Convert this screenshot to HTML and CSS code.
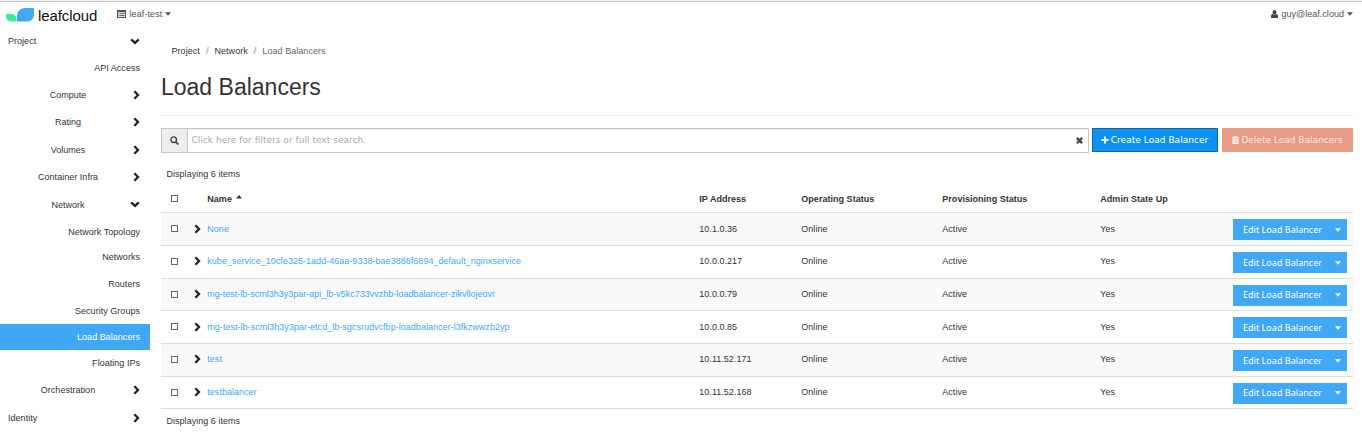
FILE: index.html
```html
<!DOCTYPE html>
<html lang="en">
<head>
<meta charset="utf-8">
<title>Load Balancers</title>
<link rel="stylesheet" href="styles.css">
</head>
<body>
<svg class="defs" width="0" height="0" aria-hidden="true">
  <symbol id="chev" viewBox="0 0 7 10"><path d="M1.4 1.2 5 5 1.4 8.8" fill="none" stroke="currentColor" stroke-width="2.3"/></symbol>
  <symbol id="down" viewBox="0 0 10 7"><path d="M1.2 1.4 5 4.9 8.8 1.4" fill="none" stroke="currentColor" stroke-width="2.3"/></symbol>
  <symbol id="caret" viewBox="0 0 6 4"><path d="M0 .3h6L3 3.7z" fill="currentColor"/></symbol>
</svg>
<header class="topbar">
  <a class="brand">
    <svg class="leaf" width="30" height="16" viewBox="0 0 30 16"><path d="M0 6h5.500c3 0 5 2.200 5 5v2.500H5.500C2 13.500 0 11 0 8z" fill="#38ef93"/><path d="M28 0v6c0 5-3 7.500-7.500 7.500H11V8.500C11 3 14 0 19.500 0z" fill="#41a8f6"/></svg>
    <span class="wordmark">leafcloud</span>
  </a>
  <div class="switch">
    <svg width="9" height="8" viewBox="0 0 9 8"><path d="M0 0h9v8H0z" fill="#555"/><path d="M1 2h7v5H1z" fill="#ddd"/><path d="M1.500 3.300h1M3.200 3.300h4.300M1.500 5.500h1M3.200 5.500h4.300" stroke="#555" stroke-width=".9"/></svg>
    <span>leaf-test</span><svg class="caret" width="6" height="4"><use href="#caret"/></svg>
  </div>
  <div class="user">
    <svg width="7" height="8" viewBox="0 0 7 8"><ellipse cx="3.500" cy="2.200" rx="1.900" ry="2.200" fill="#444"/><path d="M0 8V6.200C0 4.600.8 4 1.800 4c1 .8 2.400.8 3.400 0C6.300 4 7 4.700 7 6.200V8z" fill="#444"/></svg>
    <span>guy@leaf.cloud</span><svg class="caret" width="6" height="4"><use href="#caret"/></svg>
  </div>
</header>
<div class="layout">
<nav class="side">
  <a class="top"><span>Project</span><svg width="10" height="7"><use href="#down"/></svg></a>
  <a class="leafitem">API Access</a>
  <a class="mid"><span>Compute</span><svg width="7" height="10"><use href="#chev"/></svg></a>
  <a class="mid"><span>Rating</span><svg width="7" height="10"><use href="#chev"/></svg></a>
  <a class="mid"><span>Volumes</span><svg width="7" height="10"><use href="#chev"/></svg></a>
  <a class="mid"><span>Container Infra</span><svg width="7" height="10"><use href="#chev"/></svg></a>
  <a class="mid"><span>Network</span><svg width="10" height="7"><use href="#down"/></svg></a>
  <a class="leafitem">Network Topology</a>
  <a class="leafitem">Networks</a>
  <a class="leafitem">Routers</a>
  <a class="leafitem">Security Groups</a>
  <a class="leafitem active">Load Balancers</a>
  <a class="leafitem">Floating IPs</a>
  <a class="mid"><span>Orchestration</span><svg width="7" height="10"><use href="#chev"/></svg></a>
  <a class="top"><span>Identity</span><svg width="7" height="10"><use href="#chev"/></svg></a>
</nav>
<main class="main">
  <div class="crumbs"><a>Project</a><i>/</i><a>Network</a><i>/</i><span>Load Balancers</span></div>
  <h1>Load Balancers</h1>
  <div class="tools">
    <div class="search">
      <div class="glass"><svg width="9" height="9" viewBox="0 0 9 9"><circle cx="3.700" cy="3.700" r="2.800" fill="none" stroke="#444" stroke-width="1.400"/><path d="M5.800 5.800 8.300 8.300" stroke="#444" stroke-width="1.700"/></svg></div>
      <div class="field"><span>Click here for filters or full text search.</span><svg width="7" height="7" viewBox="0 0 7 7"><path d="M.9.900l5.200 5.200M6.100.900.900 6.100" stroke="#444" stroke-width="2.200"/></svg></div>
    </div>
    <button class="btn create"><svg width="8" height="8" viewBox="0 0 8 8"><path d="M4 .5v7M.5 4h7" stroke="#fff" stroke-width="2"/></svg><span>Create Load Balancer</span></button>
    <button class="btn delete"><svg width="7" height="8" viewBox="0 0 7 8"><path d="M0 1h2V0h3v1h2v1H0zM.6 2.500h5.800V8H.6z" fill="#fff"/><path d="M2.300 3.500V7M3.500 3.500V7M4.700 3.500V7" stroke="#e99c85" stroke-width=".5"/></svg><span>Delete Load Balancers</span></button>
  </div>
  <div class="count">Displaying 6 items</div>
  <div class="table">
    <div class="row head"><i class="box"></i><span></span><span class="name">Name<svg class="sort" width="6" height="4" viewBox="0 0 6 4"><path d="M0 3.500h6L3 0z" fill="currentColor"/></svg></span><span>IP Address</span><span>Operating Status</span><span>Provisioning Status</span><span>Admin State Up</span></div>
    <div class="row odd"><i class="box"></i><svg width="7" height="10"><use href="#chev"/></svg><a>None</a><span>10.1.0.36</span><span>Online</span><span>Active</span><span>Yes</span><div class="edit"><span>Edit Load Balancer</span><svg width="6" height="4"><use href="#caret"/></svg></div></div>
    <div class="row raised"><i class="box"></i><svg width="7" height="10"><use href="#chev"/></svg><a>kube_service_10cfe325-1add-46aa-9338-bae3888f6894_default_nginxservice</a><span>10.0.0.217</span><span>Online</span><span>Active</span><span>Yes</span><div class="edit"><span>Edit Load Balancer</span><svg width="6" height="4"><use href="#caret"/></svg></div></div>
    <div class="row odd raised"><i class="box"></i><svg width="7" height="10"><use href="#chev"/></svg><a class="tight">mg-test-lb-scml3h3y3par-api_lb-v5kc733vvzhb-loadbalancer-zikvllojeovr</a><span>10.0.0.79</span><span>Online</span><span>Active</span><span>Yes</span><div class="edit"><span>Edit Load Balancer</span><svg width="6" height="4"><use href="#caret"/></svg></div></div>
    <div class="row"><i class="box"></i><svg width="7" height="10"><use href="#chev"/></svg><a>mg-test-lb-scml3h3y3par-etcd_lb-sgcsrudvcfbp-loadbalancer-l3fkzwwzb2yp</a><span>10.0.0.85</span><span>Online</span><span>Active</span><span>Yes</span><div class="edit"><span>Edit Load Balancer</span><svg width="6" height="4"><use href="#caret"/></svg></div></div>
    <div class="row odd raised"><i class="box"></i><svg width="7" height="10"><use href="#chev"/></svg><a>test</a><span>10.11.52.171</span><span>Online</span><span>Active</span><span>Yes</span><div class="edit"><span>Edit Load Balancer</span><svg width="6" height="4"><use href="#caret"/></svg></div></div>
    <div class="row raised"><i class="box"></i><svg width="7" height="10"><use href="#chev"/></svg><a>testbalancer</a><span>10.11.52.168</span><span>Online</span><span>Active</span><span>Yes</span><div class="edit"><span>Edit Load Balancer</span><svg width="6" height="4"><use href="#caret"/></svg></div></div>
  </div>
  <div class="count foot">Displaying 6 items</div>
</main>
</div>
</body>
</html>
```
FILE: styles.css
```css
* { box-sizing: border-box; }
body {
  margin: 0;
  height: 433px;
  overflow: hidden;
  background: #fff;
  color: #333;
  font: 9px/12px "Liberation Sans", Arial, sans-serif;
  letter-spacing: .03px;
  white-space: nowrap;
}
svg { display: block; flex: none; }
.defs { position: absolute; }
.topbar {
  height: 27px;
  border-top: 1px solid #f2f2f2;
  box-shadow: inset 0 1px #c4c4c4;
  display: flex;
  align-items: center;
  padding: 0 9px 0 6px;
  color: #555;
}
.brand { display: flex; width: 111px; align-items: center; }
.leaf { margin-top: 3px; }
.wordmark { font: 15px/18px "Liberation Sans", Arial, sans-serif; letter-spacing: -.08px; color: #111; margin: 3px 0 0 2px; }
.switch, .user { display: flex; align-items: center; gap: 3px; }
.switch span { letter-spacing: .1px; padding-left: .5px; }
.user { margin-left: auto; }
.layout { display: grid; grid-template-columns: 150px 1fr; }
.side {
  display: grid;
  grid-template-rows: 28px 26px 28px 26px 29px 26px 29px 25px 27px 26px 27px 26px 27px 26px 29px;
}
.side a { display: flex; align-items: center; padding: 0 10px 0 8px; }
.side .leafitem { padding-bottom: 1px; }
.side .leafitem:nth-child(2), .side .leafitem:nth-child(8) { padding-bottom: 0; }
.side .leafitem:nth-child(11) { padding: 1px 10px 0 0; }
.top { justify-content: space-between; }
.side svg { color: #222; }
.side .mid { display: grid; grid-template-columns: 120px 1fr; }
.mid span { text-align: center; }
.mid svg { justify-self: end; }
.leafitem { justify-content: flex-end; }
.side .active { background: #41a8f6; color: #fff; }
.main { padding: 18px 9px 0 11px; }
.crumbs { display: flex; gap: 6px; padding-left: 10.500px; letter-spacing: .05px; }
.crumbs i { color: #888; font-style: normal; }
.crumbs span { color: #666; }
h1 {
  margin: 12px 0 0;
  height: 47px;
  border-bottom: 1px solid #eee;
  font-size: 23px;
  line-height: 36px;
  font-weight: 400;
  letter-spacing: 0;
}
.tools {
  display: grid;
  grid-template-columns: 928px 126px 131px;
  justify-content: space-between;
  margin-top: 12px;
  align-items: start;
  font-family: "DejaVu Sans", sans-serif;
  letter-spacing: 0;
}
.search { display: grid; grid-template-columns: 26px 1fr; height: 25px; border: 1px solid #c6c6c6; }
.glass { background: #eee; display: grid; place-items: center; border-right: 1px solid #c6c6c6; }
.field { display: flex; align-items: center; justify-content: space-between; padding: 0 5px 1px 3.500px; color: #aaa; box-shadow: inset 0 1px 1px #eee; letter-spacing: .03px; }
.btn {
  height: 24px;
  border: 1px solid #0f67ac;
  background: #0d91f2;
  color: #fff;
  padding: 0;
  font: inherit;
  display: flex;
  align-items: center;
  justify-content: center;
  gap: 2px;
}
.create { margin-left: -1px; margin-right: 1px; letter-spacing: .04px; }
.delete { background: #e99c85; border-color: #e99c85; color: #fbe8e2; }
.count { margin: 15px 0 0 5.500px; }
.table {
  display: grid;
  grid-template-rows: 32px 33px 33px 32px 33px 33px 32px;
  margin-top: 1px;
}
.row {
  display: grid;
  grid-template-columns: 22px 14px 492px 102px 141px 158px 133px 114px;
  padding-left: 10px;
  align-items: center;
  border-bottom: 1px solid #ddd;
}
.row > svg { color: #222; margin-left: .5px; }
.row > a, .row > span { padding-left: .3px; }
.row > a { color: #41a8f6; }
.row > .tight { letter-spacing: 0; }
.raised > a, .raised > span, .raised > svg { margin-bottom: 2px; }
.odd { background: #f9f9f9; }
.head { font-weight: 700; padding-top: 4px; }
.name { display: flex; align-items: center; }
.sort { margin: -4px 0 0 4px; }
.box { width: 7px; height: 7px; margin-bottom: 1px; border: 1px solid #666; background: #fff; }
.edit {
  height: 21px;
  margin-top: 1px;
  background: #41a8f6;
  color: #fff;
  display: flex;
  align-items: center;
  justify-content: space-between;
  padding: 0 6px 0 10px;
  letter-spacing: .03px;
  font-family: "Noto Sans", sans-serif;
}
.foot { margin-top: 6px; }
```
